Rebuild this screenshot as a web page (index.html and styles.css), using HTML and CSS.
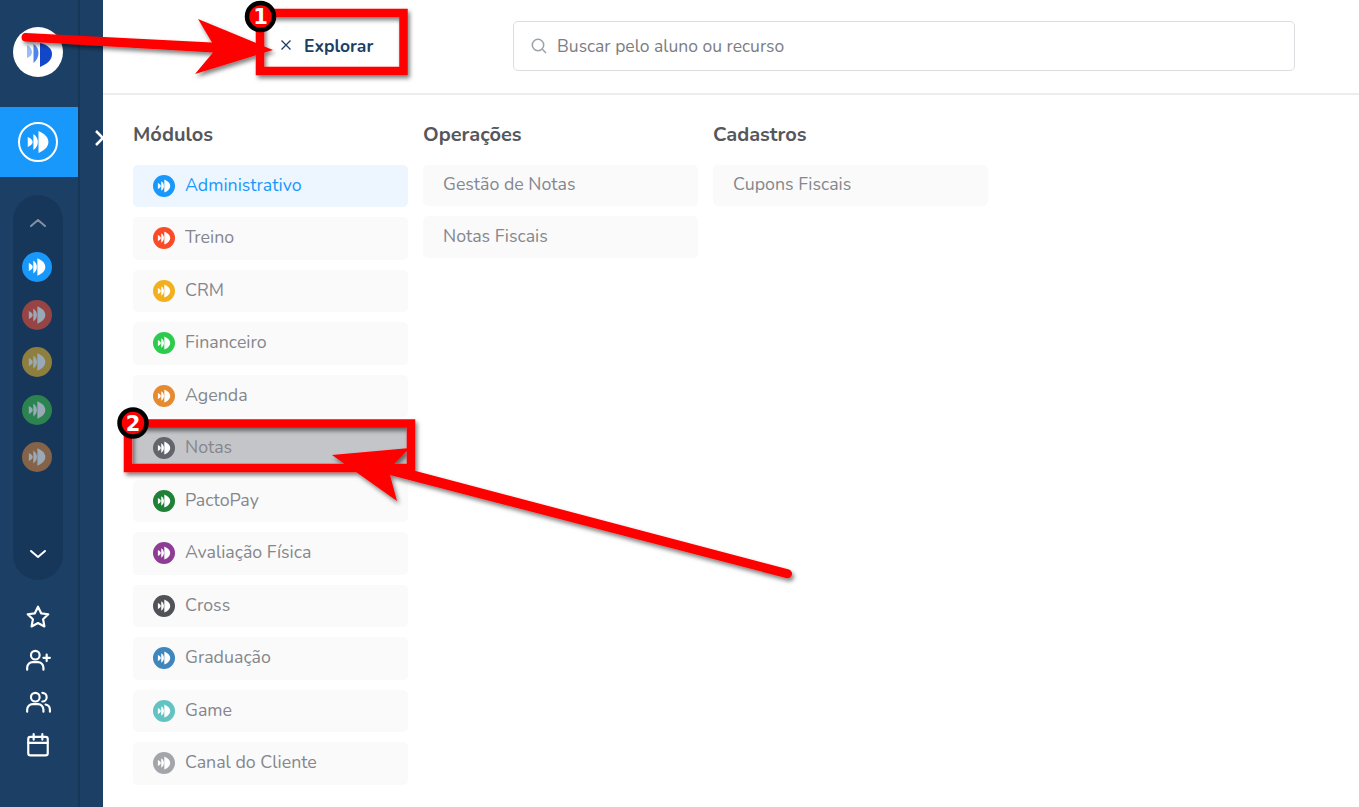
FILE: index.html
```html
<!DOCTYPE html>
<html lang="pt-BR">
<head>
<meta charset="utf-8">
<title>Explorar</title>
<link rel="stylesheet" href="styles.css">
</head>
<body>
<svg class="defs" width="0" height="0" aria-hidden="true">
  <symbol id="fan" viewBox="0 0 24 24">
    <path d="M3.800 8 C6.600 9.200 7.700 10.600 7.700 12 C7.700 13.400 6.600 14.800 3.800 16Z"/>
    <path d="M8.300 5.600 C10.900 7.400 11.900 9.700 11.900 12 C11.900 14.300 10.900 16.600 8.300 18.400Z"/>
    <path d="M12.400 3.200 C18 5.600 20.300 8.800 20.300 12 C20.300 15.200 18 18.400 12.400 20.800Z"/>
  </symbol>
</svg>
<div class="app">
  <aside class="sidebar">
    <div class="rail">
      <div class="logo-wrap">
        <div class="logo">
          <svg viewBox="0 0 26 24" width="26" height="24">
            <path fill="#9cbcf8" d="M1 2 C4.500 4 6 6.500 6 9 C6 11.500 4.500 13.500 1 15Z"/>
            <path fill="#4f84ea" d="M7.500 1 C11 3 12.500 6.500 12.500 10 C12.500 13.500 11 17 7.500 20Z"/>
            <path fill="#1247c9" d="M14 0 C22 2 26 6 26 11 C26 17 21 21 14 24Z"/>
          </svg>
        </div>
      </div>
      <div class="active-module">
        <span class="ring"><svg width="30" height="30"><use href="#fan" fill="#fff"/></svg></span>
      </div>
      <div class="pill">
        <svg class="chev dim" width="18" height="10" viewBox="0 0 18 10"><path d="M2 8 9 2l7 6"/></svg>
        <div class="pill-list">
          <span class="dot c-blue"><svg width="24" height="24"><use href="#fan" fill="#fff"/></svg></span>
          <span class="dot c-red"><svg width="24" height="24"><use href="#fan" fill="#9aa9b8"/></svg></span>
          <span class="dot c-yellow"><svg width="24" height="24"><use href="#fan" fill="#9aa9b8"/></svg></span>
          <span class="dot c-green"><svg width="24" height="24"><use href="#fan" fill="#9aa9b8"/></svg></span>
          <span class="dot c-brown"><svg width="24" height="24"><use href="#fan" fill="#9aa9b8"/></svg></span>
        </div>
        <svg class="chev" width="18" height="10" viewBox="0 0 18 10"><path d="M2 2l7 6 7-6"/></svg>
      </div>
      <nav class="tools">
        <svg width="26" height="26" viewBox="0 0 24 24"><path d="M12 2.500l2.900 6.100 6.600.9-4.800 4.600 1.200 6.600L12 17.600l-5.900 3.100 1.200-6.600-4.800-4.600 6.600-.9z"/></svg>
        <svg width="26" height="26" viewBox="0 0 24 24"><circle cx="9.500" cy="7.500" r="4"/><path d="M2 21v-2a5 5 0 0 1 5-5h5a5 5 0 0 1 5 5v2M20 7v6M17 10h6"/></svg>
        <svg width="26" height="26" viewBox="0 0 24 24"><circle cx="9.500" cy="7.500" r="4"/><path d="M2 21v-2a5 5 0 0 1 5-5h5a5 5 0 0 1 5 5v2M16 3.500a4 4 0 0 1 0 8M19 14.300a5 5 0 0 1 4 4.700v2"/></svg>
        <svg width="26" height="26" viewBox="0 0 24 24"><rect x="3" y="4.500" width="18" height="17" rx="2"/><path d="M8 2v5M16 2v5M3 10h18"/></svg>
      </nav>
    </div>
    <div class="gutter">
      <svg class="expand" width="12" height="18" viewBox="0 0 12 18"><path d="M2 2l7 7-7 7"/></svg>
    </div>
  </aside>
  <main class="main">
    <header class="topbar">
      <button class="explore" type="button">
        <svg width="12" height="12" viewBox="0 0 12 12"><path d="M1.500 1.500l9 9M10.500 1.500l-9 9"/></svg>
        <span>Explorar</span>
      </button>
      <label class="search">
        <svg width="18" height="18" viewBox="0 0 18 18"><circle cx="8" cy="8" r="5.700"/><path d="M12.300 12.300l3.700 3.700"/></svg>
        <span>Buscar pelo aluno ou recurso</span>
      </label>
    </header>
    <section class="columns">
      <div class="column">
        <h2>Módulos</h2>
        <ul class="items">
          <li class="item active"><span class="mini c-blue"><svg width="18" height="18"><use href="#fan" fill="#fff"/></svg></span>Administrativo</li>
          <li class="item"><span class="mini c-orange-red"><svg width="18" height="18"><use href="#fan" fill="#fff"/></svg></span>Treino</li>
          <li class="item"><span class="mini c-amber"><svg width="18" height="18"><use href="#fan" fill="#fff"/></svg></span>CRM</li>
          <li class="item"><span class="mini c-lime"><svg width="18" height="18"><use href="#fan" fill="#fff"/></svg></span>Financeiro</li>
          <li class="item"><span class="mini c-orange"><svg width="18" height="18"><use href="#fan" fill="#fff"/></svg></span>Agenda</li>
          <li class="item selected"><span class="mini c-slate"><svg width="18" height="18"><use href="#fan" fill="#fff"/></svg></span>Notas</li>
          <li class="item"><span class="mini c-forest"><svg width="18" height="18"><use href="#fan" fill="#fff"/></svg></span>PactoPay</li>
          <li class="item"><span class="mini c-purple"><svg width="18" height="18"><use href="#fan" fill="#fff"/></svg></span>Avaliação Física</li>
          <li class="item"><span class="mini c-char"><svg width="18" height="18"><use href="#fan" fill="#fff"/></svg></span>Cross</li>
          <li class="item"><span class="mini c-steel"><svg width="18" height="18"><use href="#fan" fill="#fff"/></svg></span>Graduação</li>
          <li class="item"><span class="mini c-teal"><svg width="18" height="18"><use href="#fan" fill="#fff"/></svg></span>Game</li>
          <li class="item"><span class="mini c-gray"><svg width="18" height="18"><use href="#fan" fill="#fff"/></svg></span>Canal do Cliente</li>
        </ul>
      </div>
      <div class="column">
        <h2>Operações</h2>
        <ul class="items compact">
          <li class="item plain">Gestão de Notas</li>
          <li class="item plain">Notas Fiscais</li>
        </ul>
      </div>
      <div class="column">
        <h2>Cadastros</h2>
        <ul class="items compact">
          <li class="item plain">Cupons Fiscais</li>
        </ul>
      </div>
    </section>
  </main>
</div>
<svg class="marks" width="1359" height="807" viewBox="0 0 1359 807" aria-hidden="true">
  <defs>
    <filter id="shade" x="-10%" y="-10%" width="120%" height="130%">
      <feDropShadow dx="2" dy="3" stdDeviation="2" flood-color="#000" flood-opacity=".5"/>
    </filter>
  </defs>
  <g filter="url(#shade)">
    <path class="frame" d="M260 13H403.500V71H260Z"/>
    <path class="frame" d="M128 423.500H411V468H128Z"/>
    <path class="arrow" d="M25.500 33 212 42.500 198 19 273 50 195 74 213 52.500 25 41.500A4.300 4.300 0 0 1 25.500 33Z"/>
    <path class="arrow" d="M789 569.500 393 465 410 448 332 455 397 501 390 475 786 578A4.500 4.500 0 0 0 789 569.500Z"/>
  </g>
  <circle class="badge" cx="260.500" cy="16.500" r="13.500"/>
  <circle class="badge" cx="133" cy="423" r="13.500"/>
  <text class="badge-num" x="260.500" y="24">1</text>
  <text class="badge-num" x="133" y="430.500">2</text>
</svg>
</body>
</html>
```
FILE: styles.css
```css
* { box-sizing: border-box; }
html, body { margin: 0; height: 100%; overflow: hidden; }
body { font-family: "Nunito", "Noto Sans", "Open Sans", sans-serif; background: #fff; }
.defs { position: absolute; }
.app { display: flex; height: 807px; }

.sidebar { width: 103px; flex: none; display: flex; background: #1c4065; overflow: hidden; }
.rail { width: 80px; flex: none; border-right: 2px solid #173759; display: flex; flex-direction: column; }
.gutter { flex: 1; padding-top: 129px; }
.expand { display: block; margin-left: 14px; }
.expand path { fill: none; stroke: #fff; stroke-width: 2.500; }
.logo-wrap { height: 107px; padding: 27px 0 0 13px; }
.logo { width: 50px; height: 50px; border-radius: 50%; background: #fff; display: flex; align-items: center; justify-content: center; padding: 6px 0 0 2px; }
.active-module { width: 78px; height: 70px; background: #1998fc; display: flex; align-items: center; justify-content: center; padding-right: 2px; }
.ring { width: 40px; height: 40px; border: 2px solid #fff; border-radius: 50%; display: flex; align-items: center; justify-content: center; }
.pill { width: 50px; height: 385px; margin: 18px 0 0 13px; border-radius: 25px; background: #17375a; display: flex; flex-direction: column; align-items: center; padding-top: 23px; }
.chev path { fill: none; stroke: #fff; stroke-width: 2; stroke-linecap: round; stroke-linejoin: round; }
.chev.dim { opacity: .45; }
.pill-list { display: flex; flex-direction: column; gap: 17.500px; margin: 24px 2px 77px 0; }
.dot { width: 30px; height: 30px; border-radius: 50%; display: flex; align-items: center; justify-content: center; }
.c-red { background: #964444; }
.c-yellow { background: #8f7f3f; }
.c-green { background: #2b8350; }
.c-brown { background: #856348; }
.tools { display: flex; flex-direction: column; align-items: center; gap: 16.500px; margin: 24px 2px 0 0; }
.tools svg { fill: none; stroke: #fff; stroke-width: 2; stroke-linecap: round; stroke-linejoin: round; }

.main { flex: 1; min-width: 0; }
.topbar { height: 95px; border-bottom: 2px solid #eceded; display: flex; align-items: flex-start; padding-top: 21px; }
.explore { width: 147px; margin: 0 0 0 176px; height: 50px; padding: 0 0 0 1px; border: 0; background: none; font: inherit; font-size: 17.500px; font-weight: 700; color: #1c4065; display: flex; align-items: center; gap: 12px; }
.explore svg { fill: none; stroke: #1c4065; stroke-width: 1.300; margin-top: -2px; }
.search { width: 782px; height: 50px; margin-left: 87px; border: 1px solid #dcdde0; border-radius: 5px; display: flex; align-items: center; gap: 9px; padding-left: 16px; color: #7b7d83; font-size: 17.500px; }
.search svg { fill: none; stroke: #9ca1a6; stroke-width: 1.500; }
.columns { display: flex; gap: 15px; padding: 25px 0 0 30px; }
.column { width: 275px; }
h2 { margin: 0 0 14.900px; font-size: 20px; line-height: 30px; font-weight: 700; color: #55575c; }
.items { list-style: none; margin: 0; padding: 0; display: flex; flex-direction: column; gap: 10px; }
.item { height: 42.500px; border-radius: 5px; background: #fafafa; display: flex; align-items: center; gap: 10px; padding: 0 0 2.500px 20px; font-size: 17.800px; color: #85878d; }
.item.plain { height: 41.500px; }
.item.active { background: #edf6fe; color: #1998fc; }
.item.selected { background: #c4c5c9; }
.mini { width: 22px; height: 22px; margin-top: 2px; border-radius: 50%; display: flex; align-items: center; justify-content: center; }
.c-blue { background: #1998fc; }
.c-orange-red { background: #fa4a28; }
.c-amber { background: #f2b01e; }
.c-lime { background: #2ccb4c; }
.c-orange { background: #e58a30; }
.c-slate { background: #63656b; }
.c-forest { background: #1f8037; }
.c-purple { background: #8d3d94; }
.c-char { background: #505257; }
.c-steel { background: #3f86bd; }
.c-teal { background: #63c3c3; }
.c-gray { background: #a2a5aa; }

.marks { position: absolute; left: 0; top: 0; pointer-events: none; }
.frame { fill: none; stroke: #f00; stroke-width: 8.500; }
.arrow { fill: #f00; }
.badge { fill: #f00; stroke: #000; stroke-width: 4.500; }
.badge-num { fill: #fff; font-family: "DejaVu Sans", sans-serif; font-weight: 700; font-size: 21px; text-anchor: middle; }
```
